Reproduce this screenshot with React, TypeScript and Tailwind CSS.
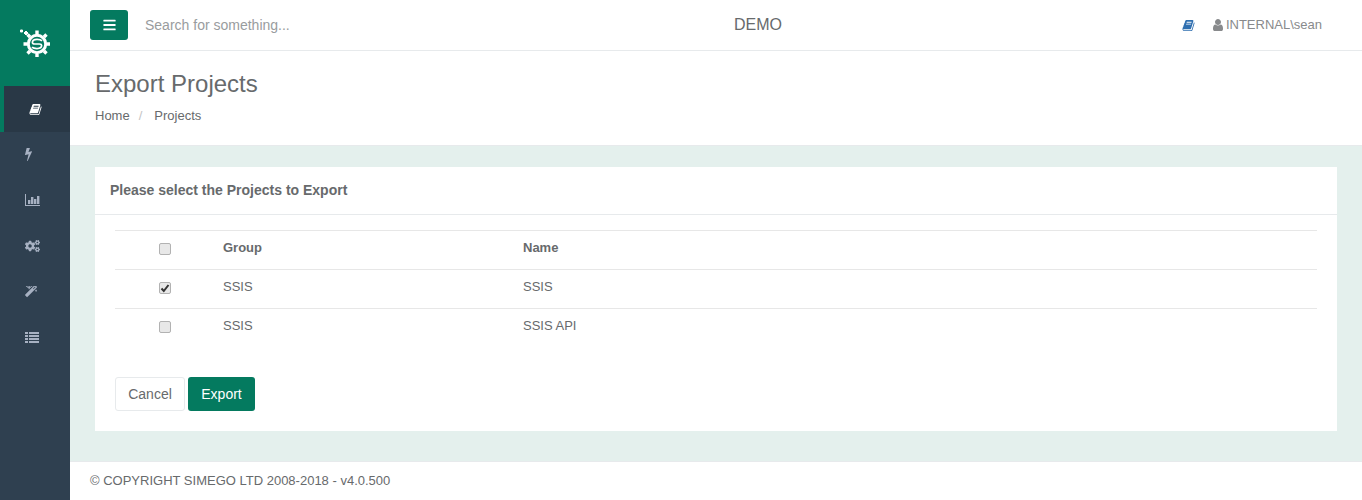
import React from 'react';
import { FaBars, FaCogs } from 'react-icons/fa';

type IconProps = { className?: string };

// Font Awesome 4 outlines, react-icons only ships the rounder v5 set
const BookIcon = ({ className }: IconProps) => (
  <svg viewBox="0 0 1792 1792" className={className} fill="currentColor">
    <path d="M1703 478q40 57 18 129l-275 906q-19 64-76.5 107.5t-122.5 43.5h-923q-77 0-148.5-53.5t-99.5-131.5q-24-67-2-127 0-4 3-27t4-37q1-8-3-21.5t-3-19.5q2-11 8-21t16.5-23.5 16.5-23.5q23-38 45-91.5t30-91.5q3-10 .5-30t-.5-28q3-11 17-28t17-23q21-36 42-92t25-90q1-9-2.5-32t.5-28q4-13 22-30.5t22-22.5q19-26 42.5-84.5t27.5-96.5q1-8-3-25.5t-2-26.5q2-8 9-18t18-23 17-21q8-12 16.5-30.5t15-35 16-36 19.5-32 26.5-23.5 36-11.5 47.5 5.5l-1 3q38-9 51-9h761q74 0 114 56t18 130l-274 906q-36 119-71.5 153.5t-128.5 34.5h-869q-27 0-38 15-11 16-1 43 24 70 144 70h923q29 0 56-15.5t35-41.5l300-987q7-22 5-57 38 15 59 43zm-1064 2q-4 13 2 22.5t20 9.5h608q13 0 25.5-9.5t16.5-22.5l21-64q4-13-2-22.5t-20-9.5h-608q-13 0-25.5 9.5t-16.5 22.5zm-83 256q-4 13 2 22.5t20 9.5h608q13 0 25.5-9.5t16.5-22.5l21-64q4-13-2-22.5t-20-9.5h-608q-13 0-25.5 9.5t-16.5 22.5z" />
  </svg>
);

const BoltIcon = ({ className }: IconProps) => (
  <svg viewBox="448 128 896 1664" className={className} fill="currentColor">
    <path d="M1333 566q18 20 7 44l-540 1157q-13 25-42 25-4 0-14-2-17-5-25.5-19t-4.5-30l197-808-406 101q-4 1-12 1-18 0-31-11-18-15-13-39l201-825q4-14 16-23t28-9h328q19 0 32 12.5t13 29.5q0 8-5 18l-171 463 396-98q8-2 12-2 19 0 34 15z" />
  </svg>
);

const ChartIcon = ({ className }: IconProps) => (
  <svg viewBox="0 0 15 12" className={className} fill="currentColor">
    <path d="M0 0h1v11h15v1H0z" />
    <path d="M3 6h2.4v4H3zM6 3h2.4v7H6zM9 5h2.4v5H9zM12 2h2.4v8H12z" />
  </svg>
);

const MagicIcon = ({ className }: IconProps) => (
  <svg viewBox="64 128 1664 1664" className={className} fill="currentColor" stroke="currentColor" strokeWidth="70">
    <path d="M1254 581l293-293-107-107-293 293zm447-293q0 27-18 45l-1286 1286q-18 18-45 18t-45-18l-198-198q-18-18-18-45t18-45l1286-1286q18-18 45-18t45 18l198 198q18 18 18 45zm-1351-190l98 30-98 30-30 98-30-98-98-30 98-30 30-98zm350 162l196 60-196 60-60 196-60-196-196-60 196-60 60-196zm930 478l98 30-98 30-30 98-30-98-98-30 98-30 30-98zm-640-640l98 30-98 30-30 98-30-98-98-30 98-30 30-98z" />
  </svg>
);

const ListIcon = ({ className }: IconProps) => (
  <svg viewBox="0 0 14 11" className={className} fill="currentColor">
    <path d="M0 0h3v2H0zM4 0h10v2H4zM0 3h3v2H0zM4 3h10v2H4zM0 6h3v2H0zM4 6h10v2H4zM0 9h3v2H0zM4 9h10v2H4z" />
  </svg>
);

const UserIcon = ({ className }: IconProps) => (
  <svg viewBox="256 128 1280 1536" className={className} fill="currentColor">
    <path d="M1536 1399q0 109-62.5 187t-150.5 78h-854q-88 0-150.5-78t-62.5-187q0-85 8.5-160.5t31.5-152 58.5-131 94-89 134.5-34.5q131 128 313 128t313-128q76 0 134.5 34.5t94 89 58.5 131 31.5 152 8.5 160.5zm-256-887q0 159-112.5 271.5t-271.5 112.5-271.5-112.5-112.5-271.5 112.5-271.5 271.5-112.5 271.5 112.5 112.5 271.5z" />
  </svg>
);

// Gear with the swoosh inside and the little sparks off its top left corner
const GearLogo = () => (
  <svg viewBox="0 0 30 28" className="w-[30px] h-[28px]" fill="none" stroke="#fff">
    <circle cx="17" cy="15" r="8.7" strokeWidth="3" />
    <path strokeWidth="3.4" d="M17 1.5v3.5M17 25v3M3.5 15H7M27 15h3M7.5 5.5l2.5 2.5M24 22l2.5 2.5M26.5 5.5L24 8M10 22l-2.5 2.5" />
    <path strokeWidth="1.7" d="M22 11.8c-1-1-3-1.4-5-1.4-2.5 0-4.6 1.2-4.6 3 0 1 1 1.6 2.4 1.6h4.4c1.4 0 2.4.6 2.4 1.6 0 1.8-2.1 3-4.6 3-2 0-4-.4-5-1.4" />
    <path strokeWidth="2" d="M0 2h3M1.5 .5v3M4 4h4M6 2v4" />
  </svg>
);

const navIcons = [
  { Icon: BoltIcon, size: 'w-[7px] h-[13px]' },
  { Icon: ChartIcon, size: 'w-[15px] h-[12px]' },
  { Icon: FaCogs, size: 'w-[15px] h-[14px]' },
  { Icon: MagicIcon, size: 'w-[12px] h-[12px]' },
  { Icon: ListIcon, size: 'w-[14px] h-[11px]' },
];

const rows = [
  { group: 'SSIS', name: 'SSIS', checked: true },
  { group: 'SSIS', name: 'SSIS API', checked: false },
];

const CheckBox = ({ checked = false }: { checked?: boolean }) => (
  <span className="relative flex w-[12px] h-[12px]">
    <input
      type="checkbox"
      readOnly
      checked={checked}
      className="appearance-none m-0 w-[12px] h-[12px] rounded-[2px] border border-[#b2b2b2] bg-[#e8e8e8]"
    />
    {checked && (
      <svg viewBox="0 0 12 12" className="absolute inset-0 w-[12px] h-[12px]" fill="none" stroke="#333" strokeWidth="2">
        <path d="M2.5 6.5l2.3 2.5 4.7-6" />
      </svg>
    )}
  </span>
);

export default function App() {
  return (
    <div className="flex h-[500px] overflow-hidden bg-white text-[13px] text-[#676a6c] font-['Liberation_Sans',sans-serif]">
      <aside className="w-[70px] shrink-0 bg-[#2f4050]">
        <div className="h-[86px] bg-[#047a5f] flex items-center pl-[20px]">
          <GearLogo />
        </div>
        <div className="h-[46px] bg-[#293846] border-l-4 border-[#047a5f] flex items-center pl-[25px]">
          <BookIcon className="w-[13px] h-[13px] text-white" />
        </div>
        {navIcons.map(({ Icon, size }, i) => (
          <div key={i} className="h-[45.6px] flex items-center pl-[25px] text-[#a7b1c2]">
            <Icon className={size} />
          </div>
        ))}
      </aside>

      <div className="flex-1 min-w-0 flex flex-col">
        <header className="h-[51px] shrink-0 flex items-center border-b border-[#e7eaec] pl-[20px] pr-[40px]">
          <button className="w-[38px] h-[30px] rounded-[3px] bg-[#047a5f] text-white flex items-center justify-center">
            <FaBars className="w-[13px] h-[14px]" />
          </button>
          <span className="ml-[17px] w-[220px] text-[14px] text-[#999c9e]">Search for something...</span>
          <span className="ml-[369px] text-[16px]">DEMO</span>
          <BookIcon className="ml-auto w-[13px] h-[13px] text-[#2f6fb0]" />
          <span className="ml-[18px] flex items-center gap-[3px] text-[#888a8c]">
            <UserIcon className="w-[10px] h-[12px]" />
            INTERNAL\sean
          </span>
        </header>

        <section className="h-[95px] shrink-0 px-[25px] pt-[20px] border-b border-[#e7eaec]">
          <h2 className="text-[24px] leading-[26px] font-normal">Export Projects</h2>
          <div className="mt-[10px] flex leading-[18px]">
            <span>Home</span>
            <span className="ml-[9px] text-[#c4c4c4]">/</span>
            <span className="ml-[12px]">Projects</span>
          </div>
        </section>

        <main className="flex-1 bg-[#e4f0ed] px-[25px] pt-[21px]">
          <div className="bg-white h-[264px]">
            <div className="h-[48px] border-b border-[#e7eaec] px-[15px] flex items-center text-[14px] font-bold">
              Please select the Projects to Export
            </div>
            <div className="px-[20px] pt-[15px]">
              <div className="grid grid-cols-[108px_300px_1fr] h-[40px] items-center border-y border-[#e7e7e7] font-bold">
                <span className="pl-[44px] pb-[2px]">
                  <CheckBox />
                </span>
                <span className="pb-[4px]">Group</span>
                <span className="pb-[4px]">Name</span>
              </div>
              {rows.map((row, i) => (
                <div
                  key={row.name}
                  className={
                    i < rows.length - 1
                      ? 'grid grid-cols-[108px_300px_1fr] h-[39px] items-center border-b border-[#e7e7e7]'
                      : 'grid grid-cols-[108px_300px_1fr] h-[38px] items-center'
                  }
                >
                  <span className="pl-[44px] pb-[2px]">
                    <CheckBox checked={row.checked} />
                  </span>
                  <span className="pb-[4px]">{row.group}</span>
                  <span className="pb-[4px]">{row.name}</span>
                </div>
              ))}
              <div className="mt-[30px] flex gap-[3px] text-[14px]">
                <button className="w-[70px] h-[34px] rounded-[3px] border border-[#e7eaec] bg-white text-[#676a6c]">Cancel</button>
                <button className="w-[67px] h-[34px] rounded-[3px] bg-[#047a5f] text-white">Export</button>
              </div>
            </div>
          </div>
        </main>

        <footer className="h-[39px] shrink-0 border-t border-[#e7eaec] pl-[20px] flex items-center">
          © COPYRIGHT SIMEGO LTD 2008-2018 - v4.0.500
        </footer>
      </div>
    </div>
  );
}
